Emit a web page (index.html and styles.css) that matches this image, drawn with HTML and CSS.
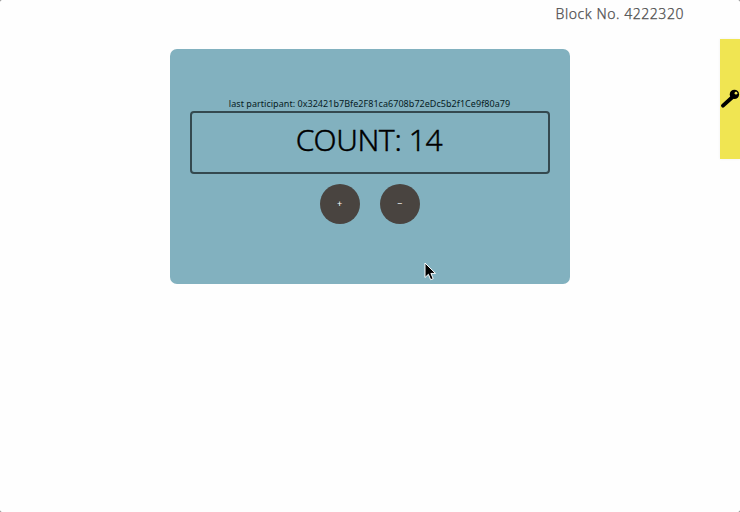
FILE: index.html
```html
<!DOCTYPE html>
<html lang="en">
<head>
<meta charset="utf-8">
<title>Counter</title>
<link rel="stylesheet" href="styles.css">
</head>
<body>
<div class="window">
<header class="block">Block No. 4222320</header>
<main class="card">
  <p class="participant">last participant: 0x32421b7Bfe2F81ca6708b72eDc5b2f1Ce9f80a79</p>
  <h1 class="count">COUNT: 14</h1>
  <div class="actions"><button class="round">+</button><button class="round">−</button></div>
</main>
</div>
<aside class="key-tab">
  <svg class="key" viewBox="0 0 20 20"><path d="M3 16.6 12 8.5" stroke="#000" stroke-width="3.9" stroke-linecap="round"/><circle cx="14.4" cy="5.4" r="4.7"/><circle cx="16" cy="4.2" r="1.4" fill="#f0e552"/></svg>
</aside>
<svg class="cursor" viewBox="0 0 12 19"><path d="M1 1v14.5l3.4-3.2 2.3 5.4 2.5-1.1-2.3-5.2h4.6z" stroke="#fff" stroke-width="1"/></svg>
</body>
</html>
```
FILE: styles.css
```css
* { box-sizing: border-box; }
body { margin: 0; height: 512px; overflow: hidden; background: #777; font-family: "Noto Sans", sans-serif; color: #000; }
.window { height: 512px; border-radius: 2px; background: #fefefe; }
.block { height: 49px; padding: 4px 56px 0 0; text-align: right; font-size: 14px; letter-spacing: 0.55px; line-height: 19px; color: #505050; font-weight: 300; -webkit-text-stroke: 0.25px #505050; }
.card { width: 400px; height: 235px; margin: 0 auto; padding: 48px 20px 0; border-radius: 7px; background: #82b1bf; }
.participant { margin: 0; height: 14px; padding-right: 1px; line-height: 14px; font-size: 9px; letter-spacing: 0.04px; text-align: center; white-space: nowrap; color: #071c24; }
.count { margin: 0; height: 63px; padding-right: 2px; border: 2px solid #34494f; border-radius: 4px; font-size: 30px; font-weight: 300; letter-spacing: -0.4px; line-height: 53px; text-align: center; -webkit-text-stroke: 0.4px #000; }
.actions { display: flex; justify-content: center; gap: 20px; margin-top: 10px; }
.round { width: 40px; height: 40px; padding: 0 1px 2px 0; border: 0; border-radius: 50%; background: #494440; color: #fff; font: 9px "Noto Sans", sans-serif; }
.key-tab { position: absolute; right: 0; top: 39px; width: 20px; height: 120px; display: flex; align-items: center; background: #f0e552; box-shadow: 0 0 3px rgba(0, 0, 0, 0.06); }
.key { width: 20px; height: 20px; }
.cursor { position: absolute; left: 424px; top: 262px; width: 12px; height: 19px; }
```
